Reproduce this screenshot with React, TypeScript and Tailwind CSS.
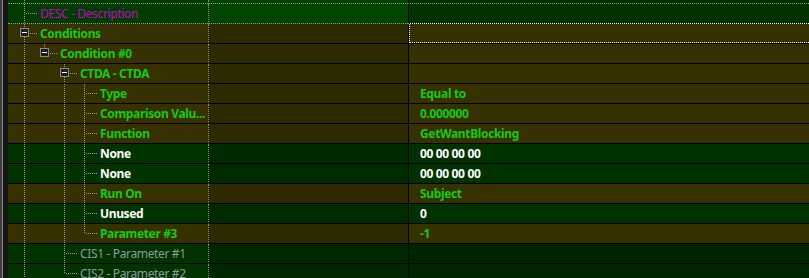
import React from "react";

type Kind = "desc" | "olive" | "green" | "dark";
type Row = {
  level: number;
  label: string;
  color: string;
  value?: string;
  vcolor?: string;
  kind: Kind;
  guides: number[];
  conn: "mid" | "last";
  box?: boolean;
};

const COLORS: Record<Kind, { a: string; b: string; c: string }> = {
  desc: { a: "bg-[#003c00]", b: "bg-[#004600]", c: "bg-[#003300]" },
  olive: { a: "bg-[#373000]", b: "bg-[#2d2900]", c: "bg-[#373000]" },
  green: { a: "bg-[#003300]", b: "bg-[#002b00]", c: "bg-[#003200]" },
  dark: { a: "bg-[#003300]", b: "bg-[#002800]", c: "bg-[#002300]" },
};

const G = "text-[#14cc14] font-bold";
const W = "text-white font-bold";

const rows: Row[] = [
  { level: 1, label: "DESC - Description", color: "text-[#c800c8]", kind: "desc", guides: [], conn: "mid" },
  { level: 1, label: "Conditions", color: G, kind: "olive", guides: [], conn: "mid", box: true },
  { level: 2, label: "Condition #0", color: G, kind: "olive", guides: [1], conn: "last", box: true },
  { level: 3, label: "CTDA - CTDA", color: G, kind: "olive", guides: [1], conn: "mid", box: true },
  { level: 4, label: "Type", color: G, value: "Equal to", vcolor: G, kind: "olive", guides: [1, 3], conn: "mid" },
  { level: 4, label: "Comparison Valu...", color: G, value: "0.000000", vcolor: G, kind: "olive", guides: [1, 3], conn: "mid" },
  { level: 4, label: "Function", color: G, value: "GetWantBlocking", vcolor: G, kind: "olive", guides: [1, 3], conn: "mid" },
  { level: 4, label: "None", color: W, value: "00 00 00 00", vcolor: W, kind: "green", guides: [1, 3], conn: "mid" },
  { level: 4, label: "None", color: W, value: "00 00 00 00", vcolor: W, kind: "green", guides: [1, 3], conn: "mid" },
  { level: 4, label: "Run On", color: G, value: "Subject", vcolor: G, kind: "olive", guides: [1, 3], conn: "mid" },
  { level: 4, label: "Unused", color: W, value: "0", vcolor: W, kind: "green", guides: [1, 3], conn: "mid" },
  { level: 4, label: "Parameter #3", color: G, value: "-1", vcolor: G, kind: "olive", guides: [1, 3], conn: "last" },
  { level: 3, label: "CIS1 - Parameter #1", color: "text-[#8c9a9c]", kind: "dark", guides: [1], conn: "mid" },
  { level: 3, label: "CIS2 - Parameter #2", color: "text-[#8c9a9c]", kind: "dark", guides: [1], conn: "last" },
];

const LINE = "#9a9a9a";

function VLine({ x, y1, y2 }: { x: number; y1: number; y2: number }) {
  return (
    <line x1={x + 0.5} x2={x + 0.5} y1={y1} y2={y2} stroke={LINE} strokeWidth={1} strokeDasharray="1 1" shapeRendering="crispEdges" />
  );
}
function HLine({ x1, x2, y }: { x1: number; x2: number; y: number }) {
  return (
    <line x1={x1} x2={x2} y1={y + 0.5} y2={y + 0.5} stroke={LINE} strokeWidth={1} strokeDasharray="1 1" shapeRendering="crispEdges" />
  );
}

function Tree({ r }: { r: Row }) {
  const w = 20 * r.level + 12;
  const gx = (l: number) => 20 * l - 4;
  const x = gx(r.level);
  const cy = 9;
  const end = 20 * r.level + 10;
  return (
    <svg width={w} height={19} className="shrink-0 block">
      {r.guides.map((l) => (
        <VLine key={l} x={gx(l)} y1={0} y2={19} />
      ))}
      {r.box ? (
        <>
          <VLine x={x} y1={0} y2={4} />
          {r.conn === "mid" && <VLine x={x} y1={13} y2={19} />}
          <rect x={x - 4 + 0.5} y={4.5} width={8} height={8} fill="#1e1e1e" stroke="#8a8a8a" strokeWidth={1} shapeRendering="crispEdges" />
          <rect x={x - 2} y={8} width={5} height={1} fill="#ffffff" shapeRendering="crispEdges" />
          <HLine x1={x + 6} x2={end} y={cy} />
        </>
      ) : (
        <>
          <VLine x={x} y1={0} y2={r.conn === "mid" ? 19 : cy + 1} />
          <HLine x1={x + 2} x2={end} y={cy} />
        </>
      )}
    </svg>
  );
}

function TreeRow({ r, idx }: { r: Row; idx: number }) {
  const c = COLORS[r.kind];
  const isDesc = idx === 0;
  const isFocus = idx === 1;
  const bA = isDesc ? "border-b border-dotted border-[#9a9a9a]" : "border-b border-solid border-black";
  const bC = isDesc ? "border-b border-dotted border-white" : "border-b border-solid border-black";
  return (
    <div className="flex h-[20px] shrink-0">
      <div className={`flex w-[200px] shrink-0 items-start overflow-hidden ${c.a} ${bA}`}>
        <Tree r={r} />
        <span className={`whitespace-nowrap leading-[19px] text-[12px] tracking-[-0.35px] ${r.color}`}>{r.label}</span>
      </div>
      <div className={`w-[200px] shrink-0 border-l border-l-[#8a8a8a] [border-left-style:dotted] ${c.b} ${bA}`} />
      <div className={`flex-1 border-l border-l-black [border-left-style:solid] ${c.c} ${bC}`}>
        {isFocus ? (
          <div className="h-full border-l border-b border-dotted border-white" />
        ) : (
          <div className={`pl-[11px] whitespace-nowrap leading-[19px] text-[12px] tracking-[-0.35px] ${r.vcolor ?? ""}`}>{r.value ?? ""}</div>
        )}
      </div>
    </div>
  );
}

export default function App() {
  return (
    <div className="flex w-[809px] h-[278px] overflow-hidden bg-black font-['Segoe_UI','Noto_Sans','Liberation_Sans',sans-serif]">
      <div className="w-[2px] bg-[#3e3e3e] shrink-0" />
      <div className="w-px bg-[#8a8a8a] shrink-0" />
      <div className="w-[5px] bg-[#161616] shrink-0" />
      <div className="flex flex-col flex-1">
        <div className="flex h-[4px] shrink-0">
          <div className="w-[200px] shrink-0 bg-[#003c00] border-b border-dotted border-[#9a9a9a]">
            <svg width={40} height={3} className="block">
              <VLine x={16} y1={0} y2={3} />
            </svg>
          </div>
          <div className="w-[200px] shrink-0 bg-[#004600] border-b border-dotted border-[#9a9a9a] border-l border-l-[#8a8a8a] [border-left-style:dotted]" />
          <div className="flex-1 bg-[#003300] border-b border-dotted border-[#9a9a9a] border-l border-l-black [border-left-style:solid]" />
        </div>
        {rows.map((r, i) => (
          <TreeRow key={i} r={r} idx={i} />
        ))}
      </div>
    </div>
  );
}
